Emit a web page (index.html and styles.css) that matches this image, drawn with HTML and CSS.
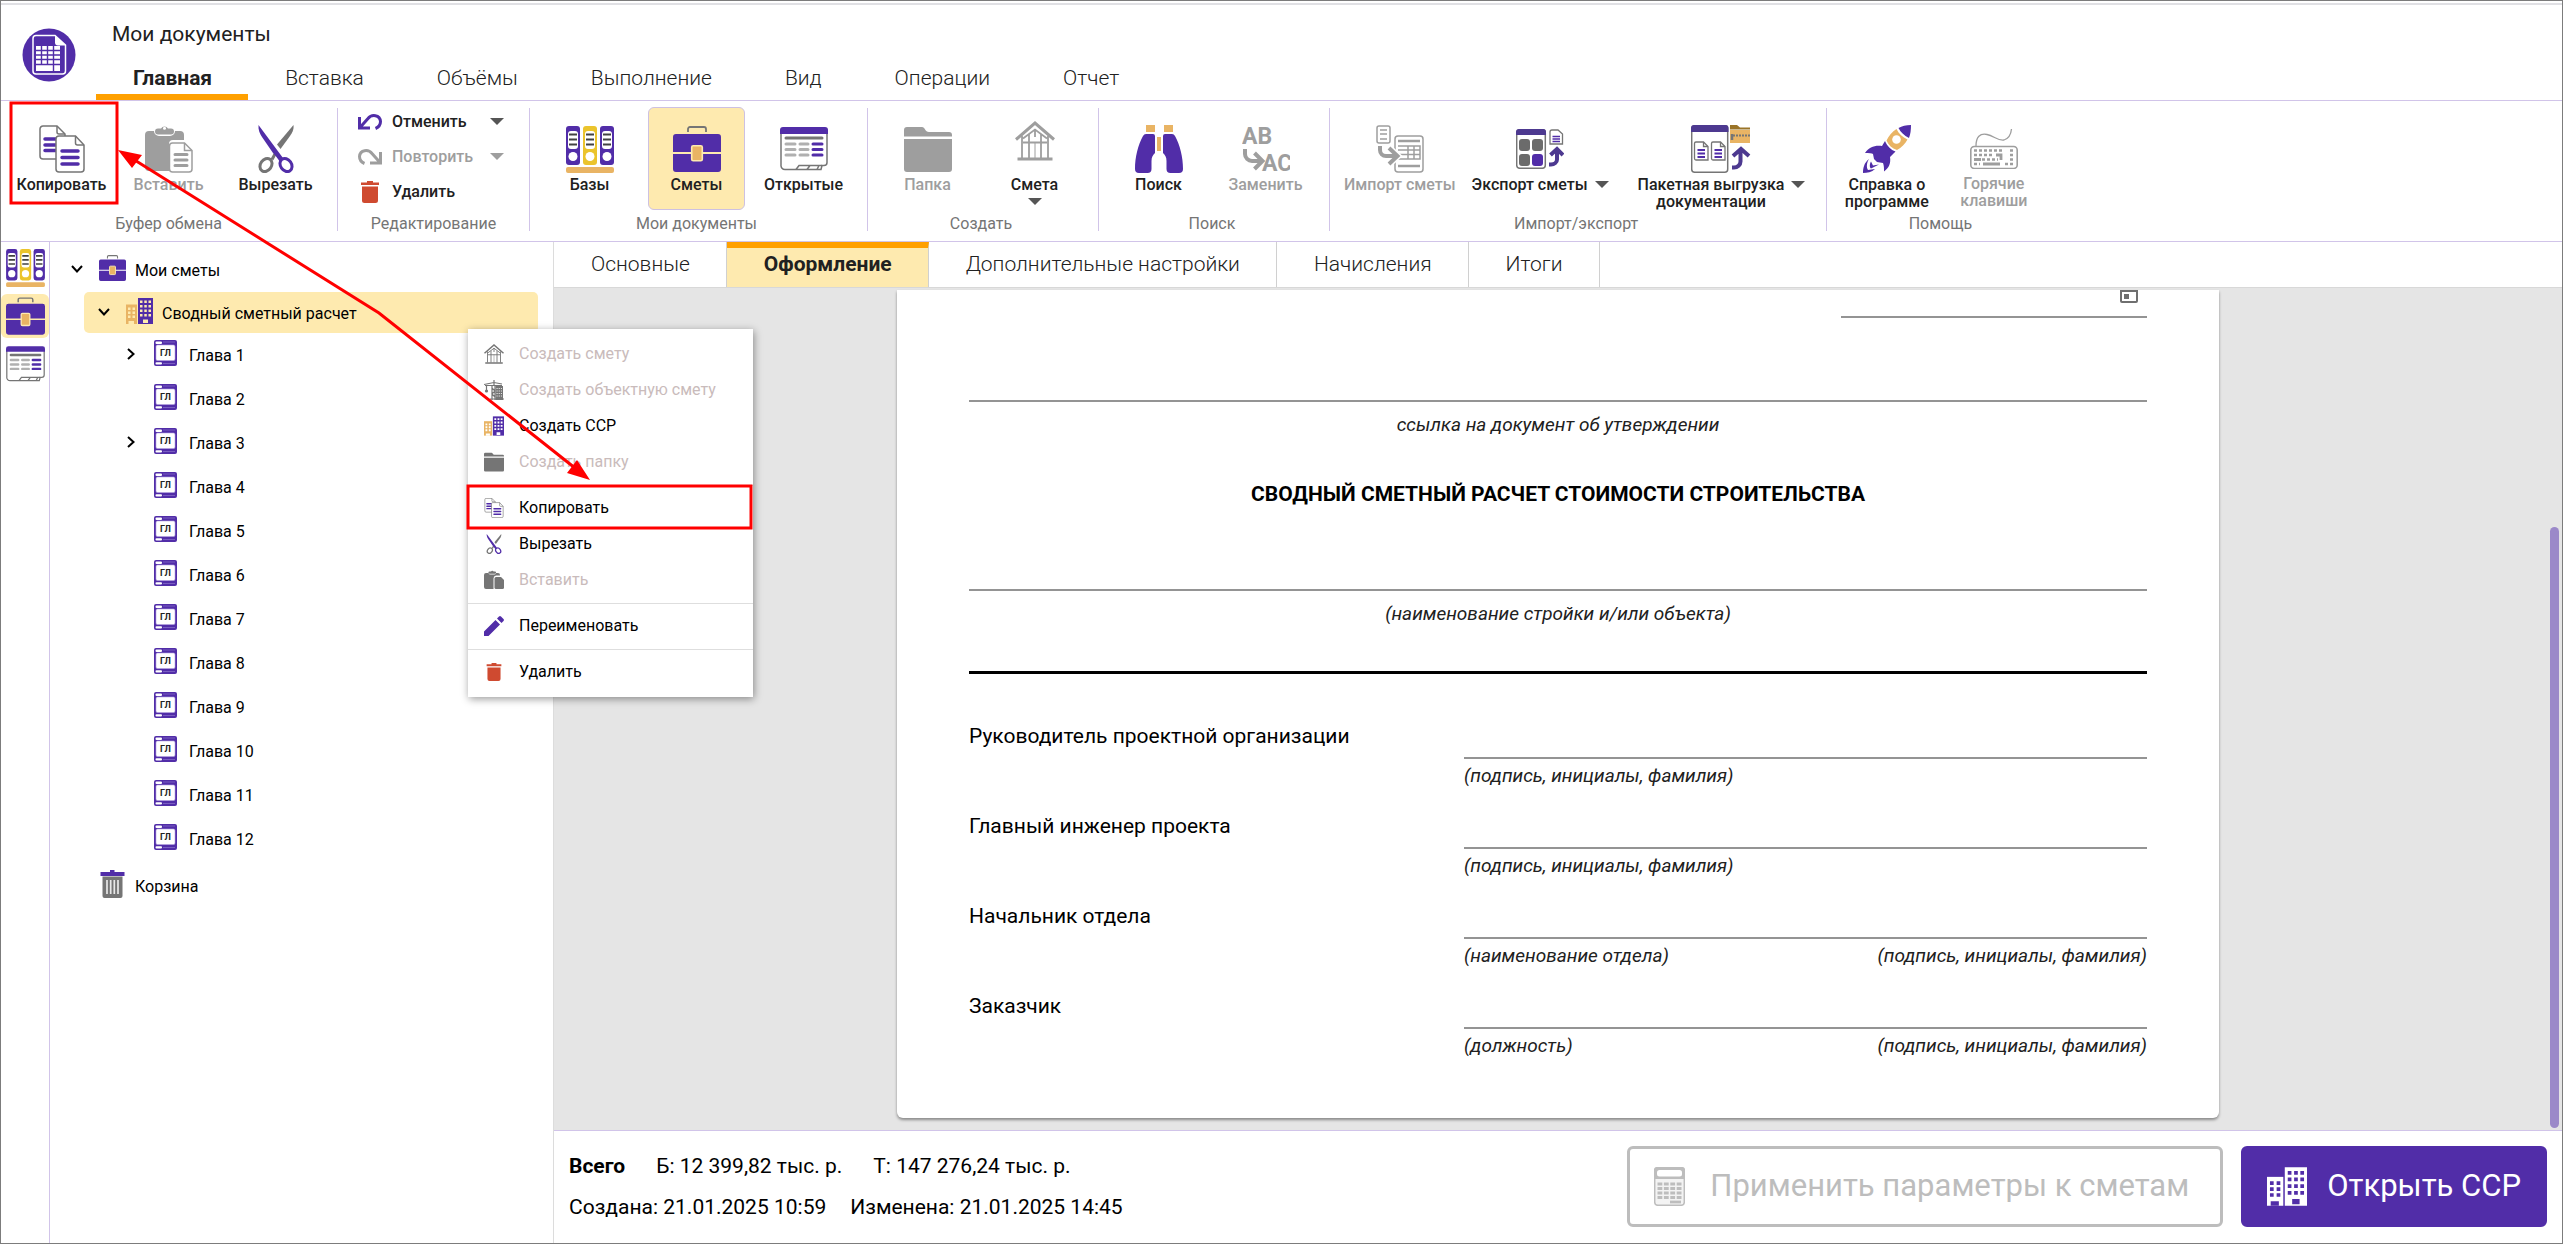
FILE: index.html
```html
<!DOCTYPE html>
<html lang="ru">
<head>
<meta charset="utf-8">
<title>Мои документы</title>
<link rel="stylesheet" href="styles.css">
</head>
<body>
<svg class="sprite" aria-hidden="true">
  <symbol id="logo" viewBox="0 0 54 54">
    <circle cx="27" cy="27" r="26.5" fill="#512da8"/>
    <path d="M14 7.500H33L43.500 17V43a3 3 0 0 1-3 3H14a3 3 0 0 1-3-3V10.500a3 3 0 0 1 3-3Z" fill="#512da8" stroke="#fff" stroke-width="1.500"/>
    <path d="M33 7.500L44 17.500H36a3 3 0 0 1-3-3Z" fill="#fff"/>
    <rect x="14" y="18" width="24" height="25" fill="#fff"/>
    <path d="M14 22.500H38M14 27H38M14 31.500H38M14 36.500H38M19.500 18V37M25.500 18V37M31.500 18V43" stroke="#512da8" stroke-width="1.400"/>
  </symbol>
  <symbol id="copy" viewBox="0 0 46 48">
    <path d="M4 1H18L26 9V34H4A3 3 0 0 1 1 31V4A3 3 0 0 1 4 1Z" fill="#fff" stroke="var(--line)" stroke-width="1.500"/>
    <path d="M18 1V7a2 2 0 0 0 2 2H26" fill="none" stroke="var(--line)" stroke-width="1.500"/>
    <path d="M6 14H18M6 20H18M6 25.500H18" stroke="var(--main)" stroke-width="3.500" stroke-linecap="round"/>
    <path d="M20 11H36.500L45 20V44a3 3 0 0 1-3 3H20a3 3 0 0 1-3-3V14A3 3 0 0 1 20 11Z" fill="#fff" stroke="var(--line)" stroke-width="1.500"/>
    <path d="M36.500 11V18a2 2 0 0 0 2 2H45" fill="none" stroke="var(--line)" stroke-width="1.500"/>
    <path d="M23 26H39M23 32.500H39M23 39H39" stroke="var(--main)" stroke-width="3.500" stroke-linecap="round"/>
  </symbol>
  <symbol id="paste" viewBox="0 0 48 48">
    <path d="M4 6H9a5 5 0 0 0 5 5H25a5 5 0 0 0 5-5H35a4 4 0 0 1 4 4V15H28a4 4 0 0 0-4 4V46H4a4 4 0 0 1-4-4V10A4 4 0 0 1 4 6Z" fill="var(--line)"/>
    <path d="M13 3.500H16a4 4 0 0 1 7 0H26a3 3 0 0 1 0 6H13a3 3 0 0 1 0-6Z" fill="var(--line)"/>
    <circle cx="19.500" cy="3.200" r="1.500" fill="#fff"/>
    <path d="M27.500 18H39.500L47 25.500V44a3 3 0 0 1-3 3H27.500a3 3 0 0 1-3-3V21a3 3 0 0 1 3-3Z" fill="#fff" stroke="var(--line)" stroke-width="1.500"/>
    <path d="M39.500 18V25.500H47" fill="none" stroke="var(--line)" stroke-width="1.500"/>
    <path d="M30 29.500H42M30 35H42M30 40.500H42" stroke="var(--line)" stroke-width="3" stroke-linecap="round"/>
  </symbol>
  <symbol id="paste-small" viewBox="0 0 20 20">
    <path d="M2 3H4.500a2 2 0 0 0 2 1.500H10A2 2 0 0 0 12 3H14a2 2 0 0 1 2 2V5.500H12a3 3 0 0 0-2.500 3V19H2a2 2 0 0 1-2-2V5A2 2 0 0 1 2 3Z" fill="var(--line)"/>
    <path d="M5.500 1.500H7a1.500 1.500 0 0 1 2.600 0H11a1 1 0 0 1 0 2.200H5.500a1 1 0 0 1 0-2.200Z" fill="var(--line)"/>
    <path d="M12 7H17L20 10V17.500a1.500 1.500 0 0 1-1.500 1.500H12a1.500 1.500 0 0 1-1.500-1.500V8.500A1.500 1.500 0 0 1 12 7Z" fill="var(--line)"/>
  </symbol>
  <symbol id="cut" viewBox="0 0 36 48">
    <path d="M35.500 0C36 5 34 8 32 11L22.500 24 19 19.500Z" fill="#757575"/>
    <path d="M17 29L14 34.500" stroke="#757575" stroke-width="3"/>
    <ellipse cx="8" cy="40" rx="5.500" ry="7" transform="rotate(35 8 40)" fill="none" stroke="#757575" stroke-width="3"/>
    <path d="M.5 0C0 5 2 9 4 12L15 28C18 31 20 34 22 37L25 33Z" fill="#512da8"/>
    <ellipse cx="28" cy="40" rx="5.500" ry="7" transform="rotate(-35 28 40)" fill="none" stroke="#512da8" stroke-width="3"/>
  </symbol>
  <symbol id="undo" viewBox="0 0 24 17">
    <path d="M1.500 4V15H12M2 14.500L10 5.500C13.500 1 22 1.500 22.500 8.500 22.500 11 21 14 17.500 15.500" fill="none" stroke="currentColor" stroke-width="3"/>
  </symbol>
  <symbol id="redo" viewBox="0 0 24 17">
    <path d="M22.500 4V15H12M22 14.500L14 5.500C10.500 1 2 1.500 1.500 8.500 1.500 11 3 14 6.500 15.500" fill="none" stroke="currentColor" stroke-width="3"/>
  </symbol>
  <symbol id="delete" viewBox="0 0 18 22">
    <path d="M6 0H12V1.500H18V4H0V1.500H6ZM1 5.500H17V19.500a2.500 2.500 0 0 1-2.500 2.500H3.500A2.500 2.500 0 0 1 1 19.500Z" fill="#cf4a30"/>
  </symbol>
  <symbol id="binders" viewBox="0 0 48 47">
    <rect width="14" height="39" rx="3" fill="#512da8"/><rect x="17" width="14" height="39" rx="3" fill="#ebc42c"/><rect x="34" width="14" height="39" rx="3" fill="#512da8"/>
    <path d="M2 8a3 3 0 0 1 3-3H9a3 3 0 0 1 3 3V20a3 3 0 0 1-3 3H5a3 3 0 0 1-3-3ZM19 8a3 3 0 0 1 3-3H26a3 3 0 0 1 3 3V20a3 3 0 0 1-3 3H22a3 3 0 0 1-3-3ZM36 8a3 3 0 0 1 3-3H43a3 3 0 0 1 3 3V20a3 3 0 0 1-3 3H39a3 3 0 0 1-3-3Z" fill="#fff"/>
    <path d="M3 8.500H11M3 13.500H11M3 18.500H11M20 8.500H28M20 13.500H28M20 18.500H28M37 8.500H45M37 13.500H45M37 18.500H45" stroke="#424242" stroke-width="2"/>
    <circle cx="7" cy="30.500" r="4.500" fill="#fff"/><circle cx="24" cy="30.500" r="4.500" fill="#fff"/><circle cx="41" cy="30.500" r="4.500" fill="#fff"/>
    <rect y="41" width="48" height="6" rx="2" fill="#e9b464"/>
  </symbol>
  <symbol id="case" viewBox="0 0 48 46">
    <path d="M15 6V3a2 2 0 0 1 2-2H31a2 2 0 0 1 2 2V6" fill="none" stroke="#757575" stroke-width="1.800"/>
    <path d="M3 8H45a3 3 0 0 1 3 3V26H0V11A3 3 0 0 1 3 8ZM0 28H48V43a3 3 0 0 1-3 3H3a3 3 0 0 1-3-3Z" fill="#512da8"/>
    <rect x="18.700" y="19.700" width="10.600" height="15" rx="1.500" fill="#e9b464" stroke="#feeaaf" stroke-width="1.600"/>
  </symbol>
  <symbol id="opened" viewBox="0 0 48 44">
    <path d="M1 6V38a4 4 0 0 0 4 4.500H41L42 38.500H44a3 3 0 0 0 3-3V6" fill="#fff" stroke="#757575" stroke-width="1.500"/>
    <path d="M16 42.500L19 38.500H42M27 42.500L30 38.500M37 42.500L39 38.500" fill="none" stroke="#757575" stroke-width="1.500"/>
    <path d="M3 0H45a3 3 0 0 1 3 3V7H0V3A3 3 0 0 1 3 0Z" fill="#512da8"/>
    <path d="M6 11H42" stroke="#757575" stroke-width="3" stroke-linecap="round"/>
    <path d="M6 17H15M6 22.500H15M6 28H15M20 17H28M20 22.500H28M20 28H28" stroke="#b0b0b0" stroke-width="3" stroke-linecap="round"/>
    <path d="M33 17H42M33 22.500H42M33 28H42" stroke="#512da8" stroke-width="3" stroke-linecap="round"/>
  </symbol>
  <symbol id="folder" viewBox="0 0 48 45">
    <path d="M0 3A3 3 0 0 1 3 0H18C21 0 21 5 25 5H45a3 3 0 0 1 3 3V9.500H0ZM0 12H48V42a3 3 0 0 1-3 3H3a3 3 0 0 1-3-3Z" fill="var(--line)"/>
  </symbol>
  <symbol id="house" viewBox="0 0 40 40">
    <g fill="none" stroke="var(--line)"><path d="M1 18.500L20 2 39 18.500" stroke-width="3"/><path d="M7 15V37M33 15V37M20 8V16M8 21.500H32M8 17.500L20 8.500 32 17.500M14 13.500V37M26 13.500V37" stroke-width="1.800"/><path d="M20 21V37" stroke-width="1"/><path d="M2.500 38H37.500" stroke-width="3"/></g>
  </symbol>
  <symbol id="search" viewBox="0 0 48 48">
    <path d="M11 0H20V7H11ZM29 0H38V7H29ZM22 12H26V26H22Z" fill="#e9b464"/>
    <path d="M11 9H18a2 2 0 0 1 2 2V28C18 30 16.500 32 16.500 36V44a4 4 0 0 1-4 4H4a4 4 0 0 1-4-4C0 32 3 20 8 11Q9 9 11 9ZM37 9H30a2 2 0 0 0-2 2V28C30 30 31.500 32 31.500 36V44a4 4 0 0 0 4 4H44a4 4 0 0 0 4-4C48 32 45 20 40 11Q39 9 37 9Z" fill="#512da8"/>
  </symbol>
  <symbol id="replace" viewBox="0 0 48 48">
    <text x="0" y="19" class="glyph-big">AB</text><text x="20" y="46" class="glyph-big">AC</text>
    <path d="M3 24V29a7 7 0 0 0 7 7H19M12.500 28L20.500 36 12.500 44" fill="none" stroke="var(--line)" stroke-width="4"/>
  </symbol>
  <symbol id="import" viewBox="0 0 48 48">
    <g fill="none" stroke="var(--line)" stroke-width="1.500"><rect x="1" y="1" width="13" height="17" rx="2"/><path d="M4 5H11M4 9H11M4 14H11"/><rect x="19" y="11" width="28" height="36" rx="3"/><path d="M22 21H44V34H22M22 25H44M22 29.500H44M32 21V34M38 21V34"/><path d="M22 16H44M22 41H44" stroke-width="2.500"/></g>
    <path d="M4 21V25a6 6 0 0 0 6 6H20M13 23L21.500 31 13 39" fill="none" stroke="#fff" stroke-width="7"/>
    <path d="M4 21V25a6 6 0 0 0 6 6H20M13 23L21.500 31 13 39" fill="none" stroke="var(--line)" stroke-width="4"/>
  </symbol>
  <symbol id="export" viewBox="0 0 48 40">
    <rect x=".7" y=".7" width="28.600" height="38.600" rx="3" fill="#fff" stroke="#757575" stroke-width="1.500"/>
    <path d="M3 0H27a3 3 0 0 1 3 3V6H0V3A3 3 0 0 1 3 0Z" fill="#4d3990"/>
    <rect x="3" y="10" width="11" height="12" rx="3" fill="#6b6b6b"/><rect x="16" y="10" width="11" height="12" rx="3" fill="#6b6b6b"/><rect x="3" y="25" width="11" height="12" rx="3" fill="#6b6b6b"/><rect x="16" y="25" width="11" height="12" rx="3" fill="#512da8"/>
    <path d="M36 1H42L46.500 5V15H34V3A2 2 0 0 1 36 1Z" fill="#fff" stroke="#757575" stroke-width="1.300"/>
    <path d="M36.500 7.500H44M36.500 10H44M36.500 12.500H44" stroke="#512da8" stroke-width="1.400"/>
    <path d="M33 35.500H35a6 5 0 0 0 6-5V20M34.500 26L41 20 47 26" fill="none" stroke="#4d3990" stroke-width="4"/>
  </symbol>
  <symbol id="batch" viewBox="0 0 60 48">
    <rect x=".7" y=".7" width="36" height="46.500" rx="3" fill="#fff" stroke="#757575" stroke-width="1.500"/>
    <path d="M3 0H34.500a3 3 0 0 1 3 3V7H0V3A3 3 0 0 1 3 0Z" fill="#4d3990"/>
    <g fill="#fff" stroke="#757575" stroke-width="1.300"><path d="M5 17H12.500L17 21.500V35H5a1.500 1.500 0 0 1-1.500-1.500V18.500A1.500 1.500 0 0 1 5 17ZM22 17H29.500L34 21.500V35H22a1.500 1.500 0 0 1-1.500-1.500V18.500A1.500 1.500 0 0 1 22 17Z"/><path d="M12.500 17V21.500H17M29.500 17V21.500H34" fill="none"/></g>
    <path d="M6.500 25H14M6.500 28.500H14M6.500 32H14M23.500 25H31M23.500 28.500H31M23.500 32H31" stroke="#512da8" stroke-width="1.800"/>
    <path d="M39 0H46L49 2.500H59V4.500H39Z" fill="#9a7428"/><path d="M39 5H59V18H39Z" fill="#e9b464"/>
    <path d="M42 10.500H59" stroke="#757575" stroke-width="2" stroke-dasharray="2 1"/><path d="M41 9V15" stroke="#757575" stroke-width="2.500"/>
    <path d="M41 42.500H43a6.500 6 0 0 0 6.500-6V24M42 31L50 24 58 31" fill="none" stroke="#4d3990" stroke-width="4"/>
  </symbol>
  <symbol id="rocket" viewBox="0 0 48 48">
    <path d="M48 0C43 0 39 1 35.500 3 37.500 7 41 10.500 46 13 47.500 9 48 5 48 0ZM22 16L19 21C12 20 6 22 2 28 6 28 9 28 10 29L11 34 14 37 20 38C21 41 21 43 21 46.500 26 43 28 38 27 32L32.500 26.500C28 25 24 21 22 16ZM6 34C1 38 0 43 0 48 4 48 9 47 12 44L5 45C3 42 4 37 6 34ZM8 36.500C6 40 7 43 8 43.500L16 39.500 10 40.500Z" fill="#512da8"/>
    <path d="M33.500 4C29 7 26 10.500 23.500 15.500 25.500 20 29 23.500 34 25 38.500 22.500 42 19 44.500 14.500 39.500 12 36 9 33.500 4Z" fill="#e9b464"/><circle cx="33.500" cy="14.500" r="4.300" fill="#fff"/>
  </symbol>
  <symbol id="keyboard" viewBox="0 0 48 40">
    <path d="M6 17C6 8 10 4 17 5.500 24 7 28 12 34 11 39 9.500 41 5 41.500 0" fill="none" stroke="var(--line)" stroke-width="1.300"/>
    <rect x=".8" y="17.500" width="46.400" height="22" rx="3.500" fill="none" stroke="var(--line)" stroke-width="1.600"/>
    <path d="M4 21.500H32M4 26H24M12 30.500H28M40 21.500H44M40 26H44M40 30.500H44M4 35H10M35 35H44" stroke="var(--line)" stroke-width="2.600" stroke-dasharray="3 2"/>
    <path d="M4 30.500H11M13 35H30M26 26H31V31" fill="none" stroke="var(--line)" stroke-width="2.800"/>
  </symbol>
  <symbol id="building" viewBox="0 0 27 26">
    <path d="M0 6.500H11V26H0Z" fill="var(--low)"/><path d="M12 0H27V26H12Z" fill="var(--high)"/>
    <path d="M2 9.500H4.500V12H2ZM6.500 9.500H9V12H6.500ZM2 13.500H4.500V16H2ZM6.500 13.500H9V16H6.500ZM2 17.500H4.500V20H2ZM6.500 17.500H9V20H6.500ZM2.500 23H8V26H2.500ZM14 2.500H16.500V5H14ZM18.300 2.500H20.800V5H18.300ZM22.500 2.500H25V5H22.500ZM14 7H16.500V9.500H14ZM18.300 7H20.800V9.500H18.300ZM22.500 7H25V9.500H22.500ZM14 11.500H16.500V14H14ZM18.300 11.500H20.800V14H18.300ZM22.500 11.500H25V14H22.500ZM14 16H16.500V18.500H14ZM18.300 16H20.800V18.500H18.300ZM22.500 16H25V18.500H22.500ZM17 21.500H22V25H17Z" fill="var(--pane)"/>
  </symbol>
  <symbol id="crane" viewBox="0 0 20 20">
    <path d="M0 4.500L10 2.500 18 4M1 5.500H18M10 0V5M8 5V20M11 5V20M8 8L11 11 8 14 11 17M2.500 5V10M6 19H20" fill="none" stroke="var(--line)" stroke-width="1.200"/>
    <circle cx="2.500" cy="11" r="1.600" fill="var(--line)"/><path d="M11.500 6H19V20H11.500Z" fill="var(--line)"/>
    <path d="M12.500 8.500H18M12.500 11H18M12.500 13.500H18M12.500 16H18" stroke="#fff" stroke-width=".8" stroke-dasharray="1.200 1"/>
  </symbol>
  <symbol id="pencil" viewBox="0 0 20 20">
    <path d="M0 15.500L11.500 4 16 8.500 4.500 20H0ZM13 2.500L15 .5a1.500 1.500 0 0 1 2 0L19.500 3a1.500 1.500 0 0 1 0 2L17.500 7Z" fill="#512da8"/>
  </symbol>
  <symbol id="chapter" viewBox="0 0 23 26">
    <rect width="23" height="26" rx="2" fill="#512da8"/>
    <rect x="2" y="5" width="19" height="15.500" rx="1.500" fill="#fff" stroke="#b7a6e0" stroke-width=".6"/>
    <rect x="1.500" y="1.500" width="6.500" height="2.400" rx="1" fill="#fff"/><rect x="1.500" y="22.200" width="6.500" height="2.400" rx="1" fill="#fff"/>
    <path d="M9 2H21M9 23.500H21" stroke="#8d74cb" stroke-width=".7"/>
    <text x="11.500" y="15.500" text-anchor="middle" class="glyph-small">ГЛ</text>
  </symbol>
  <symbol id="bin" viewBox="0 0 24 28">
    <path d="M9.500 0H14V2H24V6H0V2H9.500Z" fill="#512da8"/><path d="M2 6.500H22V26a2 2 0 0 1-2 2H4a2 2 0 0 1-2-2Z" fill="#757575"/>
    <path d="M6.500 10V24M10.200 10V24M13.800 10V24M17.500 10V24" stroke="#e8e8e8" stroke-width="1.700"/>
  </symbol>
  <symbol id="calculator" viewBox="0 0 31 39">
    <rect x=".7" y=".7" width="29.600" height="37.600" rx="3" fill="#f3f3f3" stroke="#bdbdbd" stroke-width="1.500"/>
    <path d="M3 0H28a3 3 0 0 1 3 3V12H0V3A3 3 0 0 1 3 0Z" fill="#bdbdbd"/><rect x="3" y="3" width="25" height="6.500" rx="2.500" fill="#fff"/>
    <path d="M3.500 17H28M3.500 21.500H28M3.500 26H28M3.500 30.500H28" stroke="#bdbdbd" stroke-width="3.200" stroke-dasharray="4.800 1.600"/><path d="M16 35H27" stroke="#bdbdbd" stroke-width="2.800"/>
  </symbol>
  <symbol id="down" viewBox="0 0 12 8"><path d="M1 1L6 6.500 11 1" fill="none" stroke="#000" stroke-width="2"/></symbol>
  <symbol id="right" viewBox="0 0 8 12"><path d="M1 1L6.500 6 1 11" fill="none" stroke="#000" stroke-width="2"/></symbol>
  <symbol id="caret" viewBox="0 0 14 7"><path d="M0 0H14L7 7Z" fill="currentColor"/></symbol>
</svg>

<div class="app">
  <header class="header">
    <svg class="logo" role="img" aria-label="Логотип"><use href="#logo"/></svg>
    <div class="heading">
      <h1 class="title">Мои документы</h1>
      <nav class="main-tabs">
        <button class="main-tab active">Главная</button><button class="main-tab">Вставка</button><button class="main-tab">Объёмы</button><button class="main-tab">Выполнение</button><button class="main-tab">Вид</button><button class="main-tab">Операции</button><button class="main-tab">Отчет</button>
      </nav>
    </div>
  </header>

  <div class="ribbon">
    <section class="group"><div class="tools">
      <button class="tool"><span class="pic"><svg width="46" height="48"><use href="#copy"/></svg></span>Копировать</button>
      <button class="tool" disabled><span class="pic"><svg width="48" height="48"><use href="#paste"/></svg></span>Вставить</button>
      <button class="tool"><span class="pic"><svg width="36" height="48"><use href="#cut"/></svg></span>Вырезать</button>
    </div><h2 class="group-name">Буфер обмена</h2></section>
    <section class="group edit"><div class="edit-list">
      <button class="edit-row undo"><svg width="24" height="17"><use href="#undo"/></svg><span class="edit-text">Отменить</span><svg class="caret" width="14" height="7"><use href="#caret"/></svg></button>
      <button class="edit-row" disabled><svg width="24" height="17"><use href="#redo"/></svg><span class="edit-text">Повторить</span><svg class="caret" width="14" height="7"><use href="#caret"/></svg></button>
      <button class="edit-row"><svg width="24" height="22"><use href="#delete"/></svg><span class="edit-text">Удалить</span></button>
    </div><h2 class="group-name">Редактирование</h2></section>
    <section class="group"><div class="tools">
      <button class="tool"><span class="pic"><svg width="48" height="47"><use href="#binders"/></svg></span>Базы</button>
      <button class="tool chosen"><span class="pic"><svg width="48" height="46"><use href="#case"/></svg></span>Сметы</button>
      <button class="tool"><span class="pic"><svg width="48" height="44"><use href="#opened"/></svg></span>Открытые</button>
    </div><h2 class="group-name">Мои документы</h2></section>
    <section class="group"><div class="tools">
      <button class="tool" disabled><span class="pic"><svg width="48" height="45"><use href="#folder"/></svg></span>Папка</button>
      <button class="tool"><span class="pic high"><svg class="muted" width="40" height="40"><use href="#house"/></svg></span>Смета<svg class="caret under" width="14" height="7"><use href="#caret"/></svg></button>
    </div><h2 class="group-name">Создать</h2></section>
    <section class="group"><div class="tools">
      <button class="tool"><span class="pic"><svg width="48" height="48"><use href="#search"/></svg></span>Поиск</button>
      <button class="tool" disabled><span class="pic"><svg width="48" height="48"><use href="#replace"/></svg></span>Заменить</button>
    </div><h2 class="group-name">Поиск</h2></section>
    <section class="group"><div class="tools">
      <button class="tool wide" disabled><span class="pic"><svg width="48" height="48"><use href="#import"/></svg></span>Импорт сметы</button>
      <button class="tool wide"><span class="pic"><svg width="48" height="40"><use href="#export"/></svg></span><span class="with-caret">Экспорт сметы<svg class="caret" width="14" height="7"><use href="#caret"/></svg></span></button>
      <button class="tool wide batch"><span class="pic"><svg width="60" height="48"><use href="#batch"/></svg></span><span class="with-caret"><span>Пакетная выгрузка<br>документации</span><svg class="caret" width="14" height="7"><use href="#caret"/></svg></span></button>
    </div><h2 class="group-name">Импорт/экспорт</h2></section>
    <section class="group"><div class="tools">
      <button class="tool"><span class="pic"><svg width="48" height="48"><use href="#rocket"/></svg></span>Справка о программе</button>
      <button class="tool" disabled><span class="pic"><svg width="48" height="40"><use href="#keyboard"/></svg></span>Горячие клавиши</button>
    </div><h2 class="group-name">Помощь</h2></section>
  </div>

  <div class="body">
    <nav class="rail">
      <button class="rail-button" aria-label="Базы"><svg width="39" height="38"><use href="#binders"/></svg></button>
      <button class="rail-button chosen" aria-label="Сметы"><svg width="39" height="38"><use href="#case"/></svg></button>
      <button class="rail-button" aria-label="Открытые"><svg width="39" height="36"><use href="#opened"/></svg></button>
    </nav>
    <aside class="tree">
      <div class="node root"><button class="toggle" aria-label="Свернуть"><svg width="12" height="8"><use href="#down"/></svg></button><svg class="node-icon" width="27" height="26"><use href="#case"/></svg><span>Мои сметы</span></div>
      <div class="node selected"><button class="toggle" aria-label="Свернуть"><svg width="12" height="8"><use href="#down"/></svg></button><svg class="node-icon" width="27" height="26"><use href="#building"/></svg><span>Сводный сметный расчет</span></div>
      <ul class="chapters">
        <li class="node"><button class="toggle" aria-label="Развернуть"><svg width="8" height="12"><use href="#right"/></svg></button><svg class="node-icon" width="23" height="26"><use href="#chapter"/></svg><span>Глава 1</span></li>
        <li class="node"><span class="toggle"></span><svg class="node-icon" width="23" height="26"><use href="#chapter"/></svg><span>Глава 2</span></li>
        <li class="node"><button class="toggle" aria-label="Развернуть"><svg width="8" height="12"><use href="#right"/></svg></button><svg class="node-icon" width="23" height="26"><use href="#chapter"/></svg><span>Глава 3</span></li>
        <li class="node"><span class="toggle"></span><svg class="node-icon" width="23" height="26"><use href="#chapter"/></svg><span>Глава 4</span></li>
        <li class="node"><span class="toggle"></span><svg class="node-icon" width="23" height="26"><use href="#chapter"/></svg><span>Глава 5</span></li>
        <li class="node"><span class="toggle"></span><svg class="node-icon" width="23" height="26"><use href="#chapter"/></svg><span>Глава 6</span></li>
        <li class="node"><span class="toggle"></span><svg class="node-icon" width="23" height="26"><use href="#chapter"/></svg><span>Глава 7</span></li>
        <li class="node"><span class="toggle"></span><svg class="node-icon" width="23" height="26"><use href="#chapter"/></svg><span>Глава 8</span></li>
        <li class="node"><span class="toggle"></span><svg class="node-icon" width="23" height="26"><use href="#chapter"/></svg><span>Глава 9</span></li>
        <li class="node"><span class="toggle"></span><svg class="node-icon" width="23" height="26"><use href="#chapter"/></svg><span>Глава 10</span></li>
        <li class="node"><span class="toggle"></span><svg class="node-icon" width="23" height="26"><use href="#chapter"/></svg><span>Глава 11</span></li>
        <li class="node"><span class="toggle"></span><svg class="node-icon" width="23" height="26"><use href="#chapter"/></svg><span>Глава 12</span></li>
      </ul>
      <div class="node root"><span class="toggle"></span><svg class="node-icon" width="27" height="28"><use href="#bin"/></svg><span>Корзина</span></div>
    </aside>

    <main class="work">
      <nav class="doc-tabs">
        <button class="doc-tab">Основные</button><button class="doc-tab active">Оформление</button><button class="doc-tab">Дополнительные настройки</button><button class="doc-tab">Начисления</button><button class="doc-tab">Итоги</button>
      </nav>
      <div class="canvas">
        <article class="paper">
          <div class="approval"><span class="date-icon"></span></div>
          <div class="blank first"></div>
          <p class="caption center">ссылка на документ об утверждении</p>
          <h2 class="doc-title">СВОДНЫЙ СМЕТНЫЙ РАСЧЕТ СТОИМОСТИ СТРОИТЕЛЬСТВА</h2>
          <div class="blank"></div>
          <p class="caption center">(наименование стройки и/или объекта)</p>
          <hr class="thick">
          <div class="sign"><span class="post">Руководитель проектной организации</span><div class="caption captions"><span>(подпись, инициалы, фамилия)</span></div></div>
          <div class="sign"><span class="post">Главный инженер проекта</span><div class="caption captions"><span>(подпись, инициалы, фамилия)</span></div></div>
          <div class="sign"><span class="post">Начальник отдела</span><div class="caption captions"><span>(наименование отдела)</span><span>(подпись, инициалы, фамилия)</span></div></div>
          <div class="sign"><span class="post">Заказчик</span><div class="caption captions"><span>(должность)</span><span>(подпись, инициалы, фамилия)</span></div></div>
        </article>
        <div class="scroll-thumb"></div>
      </div>
      <footer class="footer">
        <div class="totals">
          <div class="totals-row sums"><strong>Всего</strong><span>Б: 12 399,82 тыс. р.</span><span>Т: 147 276,24 тыс. р.</span></div>
          <div class="totals-row"><span>Создана: 21.01.2025 10:59</span><span>Изменена: 21.01.2025 14:45</span></div>
        </div>
        <div class="actions">
          <button class="action" disabled><svg width="31" height="39"><use href="#calculator"/></svg>Применить параметры к сметам</button>
          <button class="action primary"><svg width="40" height="39"><use href="#building"/></svg>Открыть ССР</button>
        </div>
      </footer>
    </main>
  </div>

  <div class="menu" role="menu">
    <button class="item" role="menuitem" disabled><svg width="20" height="20"><use href="#house"/></svg>Создать смету</button>
    <button class="item" role="menuitem" disabled><svg width="20" height="20"><use href="#crane"/></svg>Создать объектную смету</button>
    <button class="item" role="menuitem"><svg width="20" height="20"><use href="#building"/></svg>Создать ССР</button>
    <button class="item" role="menuitem" disabled><svg width="20" height="20"><use href="#folder"/></svg>Создать папку</button>
    <hr class="divider">
    <button class="item" role="menuitem"><svg width="20" height="20"><use href="#copy"/></svg>Копировать</button>
    <button class="item" role="menuitem"><svg width="20" height="20"><use href="#cut"/></svg>Вырезать</button>
    <button class="item" role="menuitem" disabled><svg width="20" height="20"><use href="#paste-small"/></svg>Вставить</button>
    <hr class="divider">
    <button class="item" role="menuitem"><svg width="20" height="20"><use href="#pencil"/></svg>Переименовать</button>
    <hr class="divider">
    <button class="item" role="menuitem"><svg width="20" height="18"><use href="#delete"/></svg>Удалить</button>
  </div>

  <svg class="marks" width="770" height="540" aria-hidden="true">
    <g fill="none" stroke="#f00" stroke-width="3"><rect x="11" y="103" width="106" height="100"/><rect x="468" y="486" width="283" height="42"/><path d="M133 159L379 313 575 468"/></g>
    <path d="M118 150L142 155 132 168ZM590 480L577 460 567 473Z" fill="#f00"/>
  </svg>
</div>
</body>
</html>
```
FILE: styles.css
```css
* { box-sizing: border-box; }

body {
  margin: 0;
  font-family: Roboto, "Noto Sans", sans-serif;
  font-size: 16px;
  line-height: 24px;
  color: #000;
  background: #fff;
}

button {
  margin: 0;
  padding: 0;
  border: 0;
  background: none;
  font: inherit;
  color: inherit;
}

h1, h2, p, ul, hr { margin: 0; padding: 0; border: 0; font: inherit; }
svg { flex: none; display: block; }

.sprite { display: none; }
.glyph-big { font: 700 23px Roboto, sans-serif; fill: var(--line); }
.glyph-small { font: 700 9px Roboto, sans-serif; fill: #222; }

.app {
  --main: #512da8;
  --line: #757575;
  --low: #e9b464;
  --high: #512da8;
  --pane: #fff;
  position: relative;
  display: flex;
  flex-direction: column;
  min-height: 100vh;
  border: 1px solid #7c7c7c;
}

/* header */
.header {
  display: flex;
  gap: 20px;
  height: 100px;
  padding-left: 21px;
  border-bottom: 1px solid #d1c4e9;
}
.header::before {
  content: "";
  position: absolute;
  left: 0;
  right: 0;
  top: 2px;
  height: 2px;
  background: #e0e0e4;
}
.logo { width: 54px; height: 54px; margin-top: 27px; }
.heading { display: flex; flex-direction: column; justify-content: space-between; }
.title { padding: 21px 0 0 16px; font-size: 21px; line-height: 24px; color: #212121; }
.main-tabs { display: flex; }
.main-tab {
  height: 41px;
  padding: 2px 36px 0 37px;
  border-bottom: 6px solid transparent;
  font-size: 21px;
  line-height: 24px;
  font-weight: 300;
  color: #212121;
}
.main-tab.active { border-color: #ffa000; font-weight: 700; }

/* ribbon */
.ribbon { display: flex; height: 141px; padding: 7px 0 10px; border-bottom: 1px solid #d1c4e9; }
.group {
  display: flex;
  flex-direction: column;
  justify-content: space-between;
  padding: 0 15px 0 11px;
  border-right: 1px solid #d1c4e9;
}
.group:first-child { padding: 0 13px 0 12px; }
.group:last-child { border: 0; }
.group-name { font-size: 16px; line-height: 20px; margin-bottom: -3px; text-align: center; color: #757575; }
.tools { display: flex; gap: 10px; }
.tool {
  display: flex;
  flex-direction: column;
  align-items: center;
  width: 97px;
  height: 103px;
  margin-top: -1px;
  border: 1px solid transparent;
  border-radius: 6px;
  font-size: 16px;
  line-height: 17px;
  font-weight: 500;
  color: #212121;
}
.tool.wide { width: auto; padding: 0 2px; }
.tool.batch { padding: 0 5px 0 15px; }
.tool.chosen { border-color: #cdc1e2; background: #feeaaf; }
.tool:disabled, .edit-row:disabled { --main: #9e9e9e; --line: #9e9e9e; color: #9e9e9e; }
.muted { --line: #9e9e9e; }
.pic { display: flex; align-items: center; height: 48px; margin: 17px 0 3px; }
.pic.high { align-items: flex-start; height: 52px; margin-top: 13px; }
.caret { color: #555; }
.under { margin-top: 5px; }
:disabled .caret { color: #9e9e9e; }
.with-caret { display: flex; gap: 7px; }
.with-caret .caret { margin-top: 5px; }
.edit { padding: 0 20px; width: 192px; }
.edit-list { display: flex; flex-direction: column; gap: 10px; padding-top: 1px; }
.edit-row { display: flex; align-items: center; height: 25px; font-size: 16px; font-weight: 500; color: #212121; }
.edit-row.undo svg:first-child { color: #512da8; }
.edit-text { width: 98px; padding-left: 10px; text-align: left; }
.edit-row .caret { margin-left: 10px; }

/* body */
.body { display: flex; flex: 1; }
.rail { width: 49px; padding-top: 4px; border-right: 1px solid #d1c4e9; display: flex; flex-direction: column; gap: 4px; }
.rail-button { display: flex; justify-content: center; align-items: center; height: 44px; border-radius: 6px; }
.rail-button.chosen { background: #feeaaf; }

.tree { width: 504px; padding: 6px 15px 0 34px; border-right: 1px solid #dcdcdc; }
.node { display: flex; align-items: center; height: 44px; }
.node span:last-child { padding-top: 2px; }
.toggle { display: flex; justify-content: center; align-items: center; width: 16px; height: 24px; margin: 0 9px 2px 0; }
.root .toggle { margin-right: 14px; }
.tree .root { margin-left: -15px; }
.tree .root:last-child { margin-top: 3px; }
.node-icon { margin: 0 9px 4px 0; }
.selected { height: 41px; padding-left: 12px; border-radius: 5px; background: #feeaaf; --pane: #feeaaf; }
.selected .toggle { margin-right: 14px; }
.chapters { list-style: none; padding-left: 39px; }
.chapters .toggle { margin-right: 15px; }
.chapters .node-icon { margin-right: 12px; }

.work { display: flex; flex-direction: column; flex: 1; min-width: 0; }
.doc-tabs { display: flex; border-bottom: 1px solid #d8d8d8; }
.doc-tab {
  height: 45px;
  padding: 0 36px 1px 37px;
  border-right: 1px solid #d0d0d0;
  border-top: 0 solid #ffa000;
  font-size: 21px;
  line-height: 24px;
  font-weight: 300;
  color: #212121;
}
.doc-tab.active { border-top-width: 6px; padding-bottom: 7px; background: #feeaaf; font-weight: 700; }

.canvas { position: relative; flex: 1; padding: 2px 0 12px; background: #e5e5e5; }
.paper {
  max-width: 1322px;
  margin: 0 auto;
  padding: 0 72px 61px;
  border-radius: 0 0 6px 6px;
  background: #fff;
  box-shadow: 0 2px 3px rgba(0, 0, 0, .4);
}
.approval { display: flex; justify-content: flex-end; width: 306px; height: 28px; margin-left: auto; padding-right: 9px; border-bottom: 2px solid #949494; }
.date-icon { width: 18px; height: 13px; border: 2px solid #6f6f6f; border-radius: 0 0 2px 2px; background: linear-gradient(#6f6f6f, #6f6f6f) 2px 2px / 5px 5px no-repeat; }
.blank { height: 85px; border-bottom: 2px solid #949494; }
.blank.first { height: 84px; }
.caption { font-size: 19px; font-style: italic; color: #212121; }
.center { padding-top: 11px; text-align: center; }
.doc-title { padding-top: 45px; font-size: 21px; font-weight: 700; text-align: center; }
.thick { height: 3px; margin: 45px 0 23px; background: #000; }
.sign { display: grid; grid-template-columns: 495px 1fr; grid-template-rows: 62px 28px; }
.post { grid-column: 1 / 3; padding-top: 27px; font-size: 21px; }
.captions { grid-column: 2; display: flex; justify-content: space-between; padding-top: 5px; box-shadow: 0 -2px #949494; }
.scroll-thumb { position: absolute; right: 3px; top: 239px; bottom: 2px; width: 9px; border-radius: 5px; background: #9b89c9; }

.footer { display: flex; justify-content: space-between; align-items: center; height: 113px; padding: 0 15px 2px; border-top: 1px solid #d1c4e9; }
.totals { display: flex; flex-direction: column; gap: 17px; font-size: 21px; }
.totals-row { display: flex; gap: 24px; }
.sums { gap: 31px; }
.actions { display: flex; gap: 18px; }
.action {
  display: flex;
  align-items: center;
  gap: 25px;
  height: 81px;
  padding: 0 31px 0 24px;
  border: 3px solid #bdbdbd;
  border-radius: 6px;
  font-size: 31px;
  color: #bdbdbd;
}
.action.primary { --low: #fff; --high: #fff; --pane: #512da8; gap: 20px; padding: 0 23px; border-color: #512da8; background: #512da8; color: #fff; }

/* context menu and marks over the window */
.menu { position: absolute; left: 467px; top: 328px; width: 285px; padding: 7px 0; background: #fff; box-shadow: 1px 2px 8px rgba(0, 0, 0, .4); }
.item { display: flex; align-items: center; gap: 15px; width: 100%; height: 36px; padding: 0 16px; }
.item:disabled { color: #c9bbbb; }
.divider { height: 1px; margin: 5px 0 4px; background: #dedede; }
.marks { position: absolute; left: -1px; top: -1px; pointer-events: none; }
```
